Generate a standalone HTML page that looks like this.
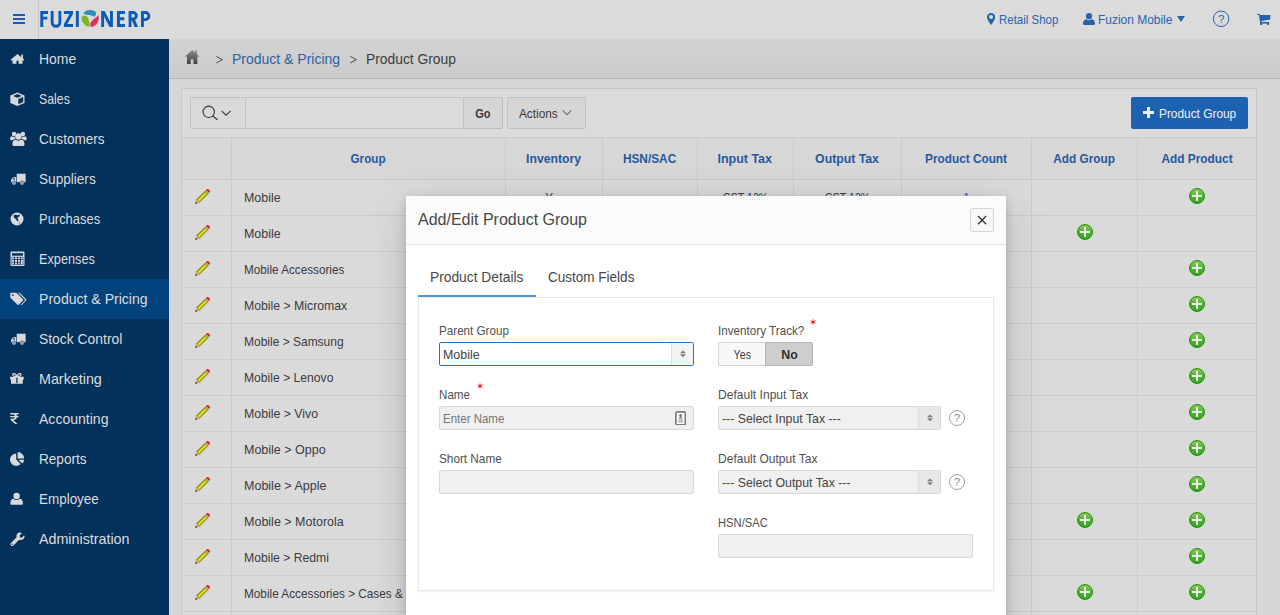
<!DOCTYPE html>
<html>
<head>
<meta charset="utf-8">
<title>Product Group</title>
<style>
*{box-sizing:border-box;margin:0;padding:0}
html,body{width:1280px;height:615px;overflow:hidden}
body{font-family:"Liberation Sans",sans-serif;font-size:12px;color:#3a3a3a;background:#d6d6d6;position:relative}
.abs{position:absolute}
.t{display:inline-block;transform-origin:0 50%;white-space:nowrap}
.tc{display:inline-block;transform-origin:50% 50%;white-space:nowrap}
/* header */
#hdr{position:absolute;left:0;top:0;width:1280px;height:39px;background:#dbdbdb}
#hdr .navbtn{position:absolute;left:0;top:0;width:39px;height:39px;border-right:1px solid #c6c6c6}
#hdr .navbtn i{position:absolute;left:13px;width:12px;height:2px;background:#1b5cb3}
.hlink{position:absolute;top:0;height:39px;line-height:41px;color:#2a62ad;font-size:12px;white-space:nowrap}
/* sidebar */
#side{position:absolute;left:0;top:39px;width:169px;height:576px;background:#02315c}
#side .it{position:absolute;left:0;width:169px;height:40px;line-height:40px;color:#dcdcdc;font-size:14px;padding-left:39px;white-space:nowrap}
#side .it.act{background:#02427d}
#side .it svg{position:absolute;left:9px;top:12px;width:18px;height:16px;fill:#d9d9d9}
/* breadcrumb */
#bc{position:absolute;left:169px;top:39px;width:1111px;height:40px;background:linear-gradient(#d3d3d3,#cbcbcb);border-bottom:1px solid #b5b5b5;font-size:14px;line-height:40px;color:#3c3c3c}
#bc span{position:absolute;top:0;white-space:nowrap}
#bc .lnk{color:#2a62a5}
/* region */
#reg{position:absolute;left:181px;top:88px;width:1076px;height:540px;background:#dbdbdb;border:1px solid #c8c8c8}
.sbox{position:absolute;left:190px;top:97px;width:274px;height:32px;border:1px solid #c2c2c2;border-radius:2px 0 0 2px;background:#dbdbdb}
.sbox .ic{position:absolute;left:0;top:0;width:55px;height:30px;border-right:1px solid #c2c2c2;background:#d9d9d9}
.btn{position:absolute;height:32px;line-height:32px;border:1px solid #c0c0c0;background:#d6d6d6;color:#383838;font-size:12px;border-radius:2px;white-space:nowrap}
.hot{position:absolute;left:1131px;top:97px;width:117px;height:32px;background:#1d62b0;color:#f0f0f0;font-size:12px;line-height:34px;border-radius:2px;white-space:nowrap}
/* table */
.th{position:absolute;top:137px;height:43px;line-height:42px;border-top:1px solid #cacaca;border-left:1px solid #cacaca;border-bottom:1px solid #c8c8c8;background:#d7d7d7;color:#25589f;font-weight:bold;font-size:12px;text-align:center;white-space:nowrap}
.row{position:absolute;left:182px;width:1074px;height:36px;border-bottom:1px solid #cbcbcb;background:#dadada}
.row .c{position:absolute;top:0;height:35px;border-left:1px solid #cbcbcb;line-height:37px;font-size:12px;color:#3a3a42;white-space:nowrap}
.row .c.g{padding-left:12px}
.row .c.ctr{text-align:center}
.pen{position:absolute;left:13px;top:8px;width:16px;height:16px}
.plus{position:absolute;top:8px;width:16px;height:16px}
/* modal */
#dlg{position:absolute;left:406px;top:196px;width:600px;height:440px;background:#ffffff;border-radius:2px;box-shadow:0 3px 10px rgba(0,0,0,.17),0 10px 40px rgba(0,0,0,.15)}
#dlg .tb{position:absolute;left:0;top:0;width:600px;height:49px;background:#fbfbfb;border-bottom:1px solid #e6e6e6;border-radius:2px 2px 0 0}
#dlg .tt{position:absolute;left:12px;top:0;line-height:47px;font-size:16px;color:#484848;white-space:nowrap}
#dlg .cl{position:absolute;left:564px;top:12px;width:24px;height:24px;border:1px solid #d4d4d4;border-radius:2px;background:#f8f8f8}
.tab{position:absolute;top:62px;height:38px;line-height:38px;font-size:14px;color:#484848;white-space:nowrap}
.tabline{position:absolute;left:12px;top:99px;width:118px;height:2px;background:#5096e0}
.tabc{position:absolute;left:12px;top:101px;width:576px;height:294px;border:1px solid #e9e9e9;box-shadow:0 1px 2px rgba(0,0,0,.06);background:#fff}
.lbl{position:absolute;font-size:12px;color:#505050;line-height:16px;white-space:nowrap}
.req{position:absolute;width:6px;height:6px}
.inp{position:absolute;height:24px;background:#f0f0f0;border:1px solid #d9d9d9;border-radius:2px;font-size:12px;line-height:24px;padding-left:3.400px;color:#444;white-space:nowrap}
.inp .arr{position:absolute;right:0;top:0;width:22px;height:22px;background:#e8e8e8;border-left:1px solid #dcdcdc}
.inp .arr svg{position:absolute;left:8px;top:7px;width:6px;height:8px}
.hlp{position:absolute;width:16px;height:16px;border:1px solid #a0a0a0;border-radius:50%;color:#8c8c8c;font-size:11px;line-height:14px;text-align:center}
</style>
</head>
<body>
<svg width="0" height="0" style="position:absolute">
  <defs>
    <linearGradient id="gg" x1="0" y1="0" x2="0" y2="1"><stop offset="0" stop-color="#8ccb55"/><stop offset="0.5" stop-color="#4fb52c"/><stop offset="1" stop-color="#35a31f"/></linearGradient>
    <g id="plus"><circle cx="8" cy="8" r="7.500" fill="url(#gg)" stroke="#2b8a1c" stroke-width="1"/><path d="M7 3h2v4h4v2h-4v4h-2v-4h-4v-2h4z" fill="#ece4ee"/></g>
    <g id="pen"><path d="M1.200 11.600 L10.300 2.500 L13.500 5.700 L4.400 14.800 L0.500 15.500 Z" fill="#8f8f12"/><path d="M2.600 12 L10.400 4.200 L11.900 5.700 L4.100 13.500 Z" fill="#dede22"/><path d="M1.200 11.600 L4.400 14.800 L0.500 15.500 Z" fill="#e3c08a"/><path d="M0.300 15.700 L2.600 15.300 L0.700 13.400 Z" fill="#2a2a38"/><path d="M10.300 2.500 L13.500 5.700" stroke="#9aa4a4" stroke-width="1.200"/><path d="M10.900 1.900 C11.800 0.800 13.300 0.900 14.200 1.800 C15.100 2.700 15.200 4.200 14.100 5.100 Z" fill="#e32412"/></g>
  </defs>
</svg>
<div id="hdr">
  <div class="navbtn"><i style="top:14px"></i><i style="top:18px"></i><i style="top:22px"></i></div>
  <svg class="abs" style="left:36px;top:4px" width="120" height="30" viewBox="0 0 120 30">
    <g fill="none" stroke="#0b5bb9" stroke-width="2.900">
      <path d="M5.750 23V7M4.300 8.450H12M4.300 14.100H11.300"/>
      <path d="M16.150 7V18.400A3.850 3.850 0 0 0 23.850 18.400V7"/>
      <path d="M27.900 8.450H37M27.900 21.550H37"/>
      <path d="M41.350 7V23"/>
      <path d="M66.650 7V23M75.450 7V23"/>
      <path d="M82.450 7V23M81 8.450H89M81 14.800H88.300M81 21.550H89"/>
      <path d="M94.050 7V23M92.600 8.450H97A3.300 3.300 0 0 1 97 15.050H92.600"/>
      <path d="M106.450 7V23M105 8.450H109.300A3.600 3.600 0 0 1 109.300 15.650H105"/>
    </g>
    <g fill="#0b5bb9">
      <path d="M33.600 9.900H37L31.300 20.100H27.900Z"/>
      <path d="M65.200 7H68.600L76.900 23H73.500Z"/>
      <path d="M95.800 16H99.200L102 23H98.600Z"/>
    </g>
    <path d="M47.300 9.800C48.500 7.500 51 6 54 6.100C57 6.100 59.500 7 60 9C60.300 10.500 59.500 12 58.300 12.700C56 11.500 53 11 50.500 10.800C49 10.600 48 10.300 47.300 9.800Z" fill="#2e8fba"/>
    <path d="M46 12.300C47.500 11.500 50 11.800 51.300 12.800C52.800 14.500 53.500 19 53.900 22.600C52.500 23 50.500 22.500 49 21C46.500 18.800 44.800 15.500 46 12.300Z" fill="#80b22d"/>
    <path d="M62.400 11.300C63.300 14 62.800 17.500 60.500 20C58.800 22 56.500 23.200 55 22.800C54 21.500 54 19.500 55 18C56.500 15.800 60.500 13.500 62.400 11.300Z" fill="#de2f5c"/>
  </svg>
  <svg class="abs" style="left:987px;top:12.800px" width="8.200" height="12.100" viewBox="0 0 8.200 12.100"><path d="M4.100 0C1.800 0 0 1.800 0 4.100c0 2.700 4.100 8 4.100 8s4.100-5.300 4.100-8C8.200 1.800 6.400 0 4.100 0zm0 6.100a2 2 0 1 1 0-4a2 2 0 0 1 0 4z" fill="#2260b0"/></svg>
  <div class="hlink" style="left:998.700px"><span class="t" style="font-size:12.7px;transform:scaleX(0.9047)">Retail Shop</span></div>
  <svg class="abs" style="left:1083px;top:13px" width="12" height="12" viewBox="0 0 12 12"><circle cx="6" cy="3.200" r="3.100" fill="#2a62ad"/><path d="M0 10.500C0 7.500 2 6.300 3.500 6.300c.7.600 1.500 1 2.500 1s1.800-.4 2.500-1C10 6.300 12 7.500 12 10.500c0 1-.8 1.500-1.600 1.500H1.600C.8 12 0 11.500 0 10.500z" fill="#2a62ad"/></svg>
  <div class="hlink" style="left:1097.700px"><span class="t" style="font-size:12.7px;transform:scaleX(0.9423)">Fuzion Mobile</span></div>
  <svg class="abs" style="left:1177px;top:16px" width="8" height="6" viewBox="0 0 8 6"><path d="M0 0h8L4 6z" fill="#2a62ad"/></svg>
  <svg class="abs" style="left:1212px;top:10px" width="18" height="18" viewBox="0 0 18 18"><circle cx="9.100" cy="8.800" r="7.750" fill="none" stroke="#2a62ad" stroke-width="1"/><text x="9.200" y="13.200" text-anchor="middle" font-family="Liberation Sans" font-size="11.500" fill="#2a62ad">?</text></svg>
  <svg class="abs" style="left:1257px;top:14px" width="14" height="12" viewBox="0 0 14 12"><path d="M0 0H2.500L3 1H13.400L13.200 5.600L4.500 6.900L4.700 8.100H12.200V9.400H12V10.900H10.200V9.400H5.200V10.900H3.300V9.400H3V8.100L2 1H0Z" fill="#2260b0"/></svg>
</div>

<div id="side">
  <div class="it" style="top:0px"><svg viewBox="0 0 18 16"><path d="M8.500 3 L1.600 8.800 L2.500 9.800 L3.500 9 V12.800 H7.400 V9.800 H9.600 V12.800 H13.500 V9 L14.500 9.800 L15.400 8.800 L14 7.600 V3.600 H12.300 V6.200 Z"/></svg><span class="t" style="font-size:14.5px;transform:scaleX(0.9618)">Home</span></div>
  <div class="it" style="top:40px"><svg viewBox="0 0 18 16"><path d="M8.400 1.600 L15.500 4.500 V11.900 L8.400 15 L1.300 11.900 V4.500 Z"/><path d="M8.400 3.100 L12.700 4.900 L8.400 6.700 L4.100 4.900 Z" fill="#02315c"/><path d="M9.300 8.100 L14.200 6.100 V11.100 L9.300 13.300 Z" fill="#02315c"/></svg><span class="t" style="font-size:14.5px;transform:scaleX(0.8492)">Sales</span></div>
  <div class="it" style="top:80px"><svg viewBox="0 0 18 16"><circle cx="9.400" cy="5.400" r="3.200"/><path d="M5 15 C3.900 15 3.400 14.400 3.400 13.500 C3.400 10.500 4.500 8.700 6.300 8.500 C7.200 9.300 8.300 9.600 9.400 9.600 S11.600 9.300 12.500 8.500 C14.300 8.700 15.500 10.500 15.500 13.500 C15.500 14.400 15 15 13.900 15 Z"/><circle cx="5" cy="3" r="2.200"/><circle cx="13.900" cy="3" r="2.200"/><path d="M1.100 7.600 C1.100 6.200 1.900 5.300 2.800 5.300 C3.600 5.900 4.800 6 5.700 5.600 C5.600 6.700 5.900 7.500 6.300 8 C4.800 8.100 4 8.600 3.600 9.200 H2.200 C1.500 9.200 1.100 8.700 1.100 7.600 Z"/><path d="M17.700 7.600 C17.700 6.200 16.900 5.300 16 5.300 C15.200 5.900 14 6 13.100 5.600 C13.200 6.700 12.900 7.500 12.500 8 C14 8.100 14.800 8.600 15.200 9.200 H16.600 C17.300 9.200 17.700 8.700 17.700 7.600 Z"/></svg><span class="t" style="font-size:14.5px;transform:scaleX(0.9358)">Customers</span></div>
  <div class="it" style="top:120px"><svg viewBox="0 0 18 16"><path d="M7.700 2.700 H16.600 V11.200 H7.700 Z"/><path d="M7.100 5.900 H4.500 L2 8.500 V11.200 H7.100 Z"/><path d="M4.900 6.800 H6 V8.400 H3.400 Z" fill="#02315c" opacity="0.850"/><circle cx="5" cy="12" r="2.100" stroke="#02315c" stroke-width="0.600"/><circle cx="13" cy="12" r="2.100" stroke="#02315c" stroke-width="0.600"/><circle cx="5" cy="12" r="0.650" fill="#02315c"/><circle cx="13" cy="12" r="0.650" fill="#02315c"/></svg><span class="t" style="font-size:14.5px;transform:scaleX(0.9380)">Suppliers</span></div>
  <div class="it" style="top:160px"><svg viewBox="0 0 18 16"><circle cx="8" cy="8" r="6.500"/><path d="M4.600 4.300 C6 3.300 7.500 3.600 8.800 4.200 C9.600 4 10.400 3.500 11 3.800 C11.200 5 10.200 5.800 9 6.300 C8.300 7 8.600 8.200 9.300 9 C9.800 9.800 9.300 10.300 8.500 10.200 C7.500 9.600 7 8.300 6.200 7.600 C5.200 6.800 4.300 5.600 4.600 4.300 Z" fill="#02315c"/><path d="M9.600 10.900 C10.300 11 11 11.600 11.300 12.500 C10.600 12.600 9.800 11.800 9.600 10.900 Z" fill="#02315c"/></svg><span class="t" style="font-size:14.5px;transform:scaleX(0.8919)">Purchases</span></div>
  <div class="it" style="top:200px"><svg viewBox="0 0 18 16"><rect x="1.500" y="0.600" width="14" height="14.400" rx="1.200"/><rect x="3" y="2.200" width="11" height="2.500" fill="#02315c"/><rect x="2.700" y="5.900" width="11.600" height="8" fill="#02315c"/><g><rect x="3.100" y="6.400" width="2" height="1.900"/><rect x="6" y="6.400" width="2" height="1.900"/><rect x="8.900" y="6.400" width="2" height="1.900"/><rect x="11.800" y="6.400" width="2" height="1.900"/><rect x="3.100" y="9" width="2" height="1.900"/><rect x="6" y="9" width="2" height="1.900"/><rect x="8.900" y="9" width="2" height="1.900"/><rect x="11.800" y="9" width="2" height="4.500"/><rect x="3.100" y="11.600" width="2" height="1.900"/><rect x="6" y="11.600" width="2" height="1.900"/><rect x="8.900" y="11.600" width="2" height="1.900"/></g></svg><span class="t" style="font-size:14.5px;transform:scaleX(0.8763)">Expenses</span></div>
  <div class="it act" style="top:240px"><svg viewBox="0 0 18 16"><path d="M1.200 2.500 Q1.200 1.700 2 1.700 H6.600 Q7.300 1.700 7.900 2.300 L13.900 8.300 Q14.400 8.800 13.900 9.400 L9.700 13.800 Q9.100 14.400 8.500 13.800 L1.900 7.200 Q1.200 6.500 1.200 5.800 Z"/><circle cx="3.700" cy="4.100" r="0.950" fill="#02427d"/><path d="M9 1.700 H9.800 Q10.500 1.700 11.100 2.300 L17.100 8.300 Q17.600 8.800 17.100 9.400 L12.900 13.800 Q12.300 14.400 11.600 14 L15.800 9.500 Q16.300 8.900 15.800 8.400 Z"/></svg><span class="t" style="font-size:14.5px;transform:scaleX(0.9695)">Product &amp; Pricing</span></div>
  <div class="it" style="top:280px"><svg viewBox="0 0 18 16"><path d="M7.700 2.700 H16.600 V11.200 H7.700 Z"/><path d="M7.100 5.900 H4.500 L2 8.500 V11.200 H7.100 Z"/><path d="M4.900 6.800 H6 V8.400 H3.400 Z" fill="#02315c" opacity="0.850"/><circle cx="5" cy="12" r="2.100" stroke="#02315c" stroke-width="0.600"/><circle cx="13" cy="12" r="2.100" stroke="#02315c" stroke-width="0.600"/><circle cx="5" cy="12" r="0.650" fill="#02315c"/><circle cx="13" cy="12" r="0.650" fill="#02315c"/></svg><span class="t" style="font-size:14.5px;transform:scaleX(0.9571)">Stock Control</span></div>
  <div class="it" style="top:320px"><svg viewBox="0 0 18 16"><path d="M1.100 5.700 H14.750 V8.500 H13.800 V12.750 H2 V8.500 H1.100 Z"/><path d="M7.300 6.400 H8.600 V12 H7.300 Z" fill="#02315c"/><path d="M7.900 5.400 C6.400 2.200 4.300 1.900 3.800 3.300 C3.400 4.600 5 5.600 7.900 5.400 C10.800 5.600 12.400 4.600 12 3.300 C11.500 1.900 9.400 2.200 7.900 5.400 Z" fill="none" stroke="#d9d9d9" stroke-width="1.200"/></svg><span class="t" style="font-size:14.5px;transform:scaleX(0.9864)">Marketing</span></div>
  <div class="it" style="top:360px"><svg viewBox="0 0 18 16"><path d="M1.200 2 H9.600 V3.500 H7.300 C7.600 3.900 7.800 4.400 7.900 4.900 H9.600 V6.300 H7.900 C7.600 8 6.200 8.900 4.100 9 L8.700 12.900 H6.200 L1.600 9 V7.700 H3.500 C5 7.700 5.800 7.200 6 6.300 H1.200 V4.900 H5.900 C5.600 3.900 4.800 3.500 3.500 3.500 H1.200 Z"/></svg><span class="t" style="font-size:14.5px;transform:scaleX(0.9687)">Accounting</span></div>
  <div class="it" style="top:400px"><svg viewBox="0 0 18 16"><path d="M7.200 2.400 V8.600 L11.600 13 A6.200 6.200 0 1 1 7.200 2.400 Z"/><path d="M8.600 1.100 A6.600 6.600 0 0 1 15.200 7.600 H8.600 Z"/><path d="M9.300 8.700 H15.200 A6.200 6.200 0 0 1 13.300 12.500 Z"/></svg><span class="t" style="font-size:14.5px;transform:scaleX(0.9356)">Reports</span></div>
  <div class="it" style="top:440px"><svg viewBox="0 0 18 16"><circle cx="7.600" cy="5" r="3.200"/><path d="M3 13.800 C2 13.800 1.400 13.300 1.400 12.300 C1.400 9.300 2.600 8 4.500 7.800 C5.300 8.600 6.400 9 7.600 9 S9.900 8.600 10.700 7.800 C12.600 8 13.900 9.300 13.900 12.300 C13.900 13.300 13.300 13.800 12.300 13.800 Z"/></svg><span class="t" style="font-size:14.5px;transform:scaleX(0.9274)">Employee</span></div>
  <div class="it" style="top:480px"><svg viewBox="0 0 18 16"><path d="M15.600 4.900 C15.600 7.300 13.700 8.900 11.600 8.900 C11.100 8.900 10.600 8.800 10.200 8.700 L4.400 14.400 C3.700 15.100 2.600 15.100 2 14.400 C1.300 13.700 1.300 12.700 2 12 L7.700 6.300 C7.100 4.300 8.100 1.600 11 1.600 C11.800 1.600 12.500 1.800 13 2.100 L10.600 4.500 L11 6.400 L12.700 6.800 L15.100 4.400 C15.400 4.500 15.600 4.700 15.600 4.900 Z"/><circle cx="3.200" cy="13.200" r="0.700" fill="#02315c"/></svg><span class="t" style="font-size:14.5px;transform:scaleX(0.9851)">Administration</span></div>
</div>

<div id="bc">
  <svg class="abs" style="left:15px;top:10px" width="16" height="16" viewBox="0 0 16 16"><defs><linearGradient id="hg" x1="0" y1="0" x2="0" y2="1"><stop offset="0" stop-color="#8c8c8c"/><stop offset="1" stop-color="#444"/></linearGradient></defs><path d="M8.200 0.900L1 7.600H3V14.900H6.800V10.300H9.400V14.900H13.300V7.600H15.300L12.800 5.300V1.300H11.200V3.800Z" fill="url(#hg)"/></svg>
  <svg class="abs" style="left:46.800px;top:16.500px" width="8" height="8" viewBox="0 0 8 8"><path d="M0.300 0.500L6.400 3.700L0.300 6.900" fill="none" stroke="#3a3a3a" stroke-width="0.900"/></svg>
  <span class="lnk" style="left:63.300px"><span class="t" style="font-size:14.2px;transform:scaleX(0.9863)">Product &amp; Pricing</span></span>
  <svg class="abs" style="left:181px;top:16.500px" width="8" height="8" viewBox="0 0 8 8"><path d="M0.300 0.500L6.400 3.700L0.300 6.900" fill="none" stroke="#3a3a3a" stroke-width="0.900"/></svg>
  <span style="left:197.300px"><span class="t" style="font-size:14.2px;transform:scaleX(0.9746)">Product Group</span></span>
</div>

<div id="reg"></div>
<div class="sbox"><div class="ic">
  <svg class="abs" style="left:11px;top:6px" width="36" height="18" viewBox="0 0 36 18"><circle cx="6.700" cy="7.800" r="5.700" fill="none" stroke="#3c3c3c" stroke-width="1.100"/><path d="M10.800 11.900 L15.500 15.700" stroke="#3c3c3c" stroke-width="1.300" fill="none"/><path d="M19.600 6.800 L24.100 11.200 L28.600 6.800" stroke="#3c3c3c" stroke-width="1.100" fill="none"/></svg>
</div></div>
<div class="btn" style="left:463px;top:97px;width:40px;font-weight:bold;border-radius:0 2px 2px 0;text-align:center"><span class="tc" style="font-size:12.7px;transform:scaleX(0.8675)">Go</span></div>
<div class="btn" style="left:507px;top:97px;width:79px;padding-left:11px"><span class="t" style="font-size:12.7px;transform:scaleX(0.9292)">Actions</span><svg class="abs" style="left:53.500px;top:11px" width="10" height="8" viewBox="0 0 10 8"><path d="M0.700 1.500 L5 5.700 L9.300 1.500" stroke="#3c3c3c" stroke-width="1" fill="none"/></svg></div>
<div class="hot"><svg class="abs" style="left:12px;top:10px" width="11" height="11" viewBox="0 0 11 11"><path d="M4 0h3v4h4v3H7v4H4V7H0V4h4z" fill="#f0f0f0"/></svg><span style="position:absolute;left:27.700px"><span class="t" style="font-size:12.7px;transform:scaleX(0.9359)">Product Group</span></span></div>

<div class="th" style="left:182px;width:49px;border-left:0;"></div>
<div class="th" style="left:231px;width:274px;"><span class="tc" style="font-size:12.7px;transform:scaleX(0.9214)">Group</span></div>
<div class="th" style="left:505px;width:97px;"><span class="tc" style="font-size:12.7px;transform:scaleX(0.9622)">Inventory</span></div>
<div class="th" style="left:602px;width:95px;"><span class="tc" style="font-size:12.7px;transform:scaleX(0.9343)">HSN/SAC</span></div>
<div class="th" style="left:697px;width:96px;padding-right:2px;"><span class="tc" style="font-size:12.7px;transform:scaleX(0.9820)">Input Tax</span></div>
<div class="th" style="left:793px;width:108px;"><span class="tc" style="font-size:12.7px;transform:scaleX(0.9670)">Output Tax</span></div>
<div class="th" style="left:901px;width:130px;"><span class="tc" style="font-size:12.7px;transform:scaleX(0.9299)">Product Count</span></div>
<div class="th" style="left:1031px;width:106px;"><span class="tc" style="font-size:12.7px;transform:scaleX(0.9320)">Add Group</span></div>
<div class="th" style="left:1137px;width:119px;"><span class="tc" style="font-size:12.7px;transform:scaleX(0.9358)">Add Product</span></div>
<div class="row" style="top:180px"><div class="c" style="left:0;width:49px;border-left:0"><svg class="pen" viewBox="0 0 16 16"><use href="#pen"/></svg></div><div class="c g" style="left:49px;width:274px"><span class="t" style="font-size:12.7px;transform:scaleX(0.9810)">Mobile</span></div><div class="c ctr" style="left:323px;width:97px"><span class="tc" style="font-size:12.7px;transform:scaleX(0.9208)">Y</span><span style="display:inline-block;width:10.200px"></span></div><div class="c ctr" style="left:420px;width:95px"></div><div class="c ctr" style="left:515px;width:96px"><span class="tc" style="font-size:12.7px;transform:scaleX(0.8299)">GST 12%</span></div><div class="c ctr" style="left:611px;width:108px"><span class="tc" style="font-size:12.7px;transform:scaleX(0.8299)">GST 12%</span></div><div class="c ctr" style="left:719px;width:130px;color:#25589f"><span class="tc" style="font-size:12.7px;transform:scaleX(0.9203)">1</span></div><div class="c" style="left:849px;width:106px"></div><div class="c" style="left:955px;width:119px"><svg class="plus" style="left:51px" viewBox="0 0 16 16"><use href="#plus"/></svg></div></div>
<div class="row" style="top:216px"><div class="c" style="left:0;width:49px;border-left:0"><svg class="pen" viewBox="0 0 16 16"><use href="#pen"/></svg></div><div class="c g" style="left:49px;width:274px"><span class="t" style="font-size:12.7px;transform:scaleX(0.9810)">Mobile</span></div><div class="c ctr" style="left:323px;width:97px"></div><div class="c ctr" style="left:420px;width:95px"></div><div class="c ctr" style="left:515px;width:96px"></div><div class="c ctr" style="left:611px;width:108px"></div><div class="c ctr" style="left:719px;width:130px"></div><div class="c" style="left:849px;width:106px"><svg class="plus" style="left:45px" viewBox="0 0 16 16"><use href="#plus"/></svg></div><div class="c" style="left:955px;width:119px"></div></div>
<div class="row" style="top:252px"><div class="c" style="left:0;width:49px;border-left:0"><svg class="pen" viewBox="0 0 16 16"><use href="#pen"/></svg></div><div class="c g" style="left:49px;width:274px"><span class="t" style="font-size:12.7px;transform:scaleX(0.9236)">Mobile Accessories</span></div><div class="c ctr" style="left:323px;width:97px"></div><div class="c ctr" style="left:420px;width:95px"></div><div class="c ctr" style="left:515px;width:96px"></div><div class="c ctr" style="left:611px;width:108px"></div><div class="c ctr" style="left:719px;width:130px"></div><div class="c" style="left:849px;width:106px"></div><div class="c" style="left:955px;width:119px"><svg class="plus" style="left:51px" viewBox="0 0 16 16"><use href="#plus"/></svg></div></div>
<div class="row" style="top:288px"><div class="c" style="left:0;width:49px;border-left:0"><svg class="pen" viewBox="0 0 16 16"><use href="#pen"/></svg></div><div class="c g" style="left:49px;width:274px"><span class="t" style="font-size:12.7px;transform:scaleX(0.9661)">Mobile &gt; Micromax</span></div><div class="c ctr" style="left:323px;width:97px"></div><div class="c ctr" style="left:420px;width:95px"></div><div class="c ctr" style="left:515px;width:96px"></div><div class="c ctr" style="left:611px;width:108px"></div><div class="c ctr" style="left:719px;width:130px"></div><div class="c" style="left:849px;width:106px"></div><div class="c" style="left:955px;width:119px"><svg class="plus" style="left:51px" viewBox="0 0 16 16"><use href="#plus"/></svg></div></div>
<div class="row" style="top:324px"><div class="c" style="left:0;width:49px;border-left:0"><svg class="pen" viewBox="0 0 16 16"><use href="#pen"/></svg></div><div class="c g" style="left:49px;width:274px"><span class="t" style="font-size:12.7px;transform:scaleX(0.9447)">Mobile &gt; Samsung</span></div><div class="c ctr" style="left:323px;width:97px"></div><div class="c ctr" style="left:420px;width:95px"></div><div class="c ctr" style="left:515px;width:96px"></div><div class="c ctr" style="left:611px;width:108px"></div><div class="c ctr" style="left:719px;width:130px"></div><div class="c" style="left:849px;width:106px"></div><div class="c" style="left:955px;width:119px"><svg class="plus" style="left:51px" viewBox="0 0 16 16"><use href="#plus"/></svg></div></div>
<div class="row" style="top:360px"><div class="c" style="left:0;width:49px;border-left:0"><svg class="pen" viewBox="0 0 16 16"><use href="#pen"/></svg></div><div class="c g" style="left:49px;width:274px"><span class="t" style="font-size:12.7px;transform:scaleX(0.9567)">Mobile &gt; Lenovo</span></div><div class="c ctr" style="left:323px;width:97px"></div><div class="c ctr" style="left:420px;width:95px"></div><div class="c ctr" style="left:515px;width:96px"></div><div class="c ctr" style="left:611px;width:108px"></div><div class="c ctr" style="left:719px;width:130px"></div><div class="c" style="left:849px;width:106px"></div><div class="c" style="left:955px;width:119px"><svg class="plus" style="left:51px" viewBox="0 0 16 16"><use href="#plus"/></svg></div></div>
<div class="row" style="top:396px"><div class="c" style="left:0;width:49px;border-left:0"><svg class="pen" viewBox="0 0 16 16"><use href="#pen"/></svg></div><div class="c g" style="left:49px;width:274px"><span class="t" style="font-size:12.7px;transform:scaleX(0.9717)">Mobile &gt; Vivo</span></div><div class="c ctr" style="left:323px;width:97px"></div><div class="c ctr" style="left:420px;width:95px"></div><div class="c ctr" style="left:515px;width:96px"></div><div class="c ctr" style="left:611px;width:108px"></div><div class="c ctr" style="left:719px;width:130px"></div><div class="c" style="left:849px;width:106px"></div><div class="c" style="left:955px;width:119px"><svg class="plus" style="left:51px" viewBox="0 0 16 16"><use href="#plus"/></svg></div></div>
<div class="row" style="top:432px"><div class="c" style="left:0;width:49px;border-left:0"><svg class="pen" viewBox="0 0 16 16"><use href="#pen"/></svg></div><div class="c g" style="left:49px;width:274px"><span class="t" style="font-size:12.7px;transform:scaleX(0.9849)">Mobile &gt; Oppo</span></div><div class="c ctr" style="left:323px;width:97px"></div><div class="c ctr" style="left:420px;width:95px"></div><div class="c ctr" style="left:515px;width:96px"></div><div class="c ctr" style="left:611px;width:108px"></div><div class="c ctr" style="left:719px;width:130px"></div><div class="c" style="left:849px;width:106px"></div><div class="c" style="left:955px;width:119px"><svg class="plus" style="left:51px" viewBox="0 0 16 16"><use href="#plus"/></svg></div></div>
<div class="row" style="top:468px"><div class="c" style="left:0;width:49px;border-left:0"><svg class="pen" viewBox="0 0 16 16"><use href="#pen"/></svg></div><div class="c g" style="left:49px;width:274px"><span class="t" style="font-size:12.7px;transform:scaleX(0.9861)">Mobile &gt; Apple</span></div><div class="c ctr" style="left:323px;width:97px"></div><div class="c ctr" style="left:420px;width:95px"></div><div class="c ctr" style="left:515px;width:96px"></div><div class="c ctr" style="left:611px;width:108px"></div><div class="c ctr" style="left:719px;width:130px"></div><div class="c" style="left:849px;width:106px"></div><div class="c" style="left:955px;width:119px"><svg class="plus" style="left:51px" viewBox="0 0 16 16"><use href="#plus"/></svg></div></div>
<div class="row" style="top:504px"><div class="c" style="left:0;width:49px;border-left:0"><svg class="pen" viewBox="0 0 16 16"><use href="#pen"/></svg></div><div class="c g" style="left:49px;width:274px"><span class="t" style="font-size:12.7px;transform:scaleX(0.9862)">Mobile &gt; Motorola</span></div><div class="c ctr" style="left:323px;width:97px"></div><div class="c ctr" style="left:420px;width:95px"></div><div class="c ctr" style="left:515px;width:96px"></div><div class="c ctr" style="left:611px;width:108px"></div><div class="c ctr" style="left:719px;width:130px"></div><div class="c" style="left:849px;width:106px"><svg class="plus" style="left:45px" viewBox="0 0 16 16"><use href="#plus"/></svg></div><div class="c" style="left:955px;width:119px"><svg class="plus" style="left:51px" viewBox="0 0 16 16"><use href="#plus"/></svg></div></div>
<div class="row" style="top:540px"><div class="c" style="left:0;width:49px;border-left:0"><svg class="pen" viewBox="0 0 16 16"><use href="#pen"/></svg></div><div class="c g" style="left:49px;width:274px"><span class="t" style="font-size:12.7px;transform:scaleX(0.9595)">Mobile &gt; Redmi</span></div><div class="c ctr" style="left:323px;width:97px"></div><div class="c ctr" style="left:420px;width:95px"></div><div class="c ctr" style="left:515px;width:96px"></div><div class="c ctr" style="left:611px;width:108px"></div><div class="c ctr" style="left:719px;width:130px"></div><div class="c" style="left:849px;width:106px"></div><div class="c" style="left:955px;width:119px"><svg class="plus" style="left:51px" viewBox="0 0 16 16"><use href="#plus"/></svg></div></div>
<div class="row" style="top:576px"><div class="c" style="left:0;width:49px;border-left:0"><svg class="pen" viewBox="0 0 16 16"><use href="#pen"/></svg></div><div class="c g" style="left:49px;width:274px"><span class="t" style="font-size:12.7px;transform:scaleX(0.9289)">Mobile Accessories &gt; Cases &amp;</span></div><div class="c ctr" style="left:323px;width:97px"></div><div class="c ctr" style="left:420px;width:95px"></div><div class="c ctr" style="left:515px;width:96px"></div><div class="c ctr" style="left:611px;width:108px"></div><div class="c ctr" style="left:719px;width:130px"></div><div class="c" style="left:849px;width:106px"><svg class="plus" style="left:45px" viewBox="0 0 16 16"><use href="#plus"/></svg></div><div class="c" style="left:955px;width:119px"><svg class="plus" style="left:51px" viewBox="0 0 16 16"><use href="#plus"/></svg></div></div>
<div class="row" style="top:612px"><div class="c" style="left:0;width:49px;border-left:0"><svg class="pen" viewBox="0 0 16 16"><use href="#pen"/></svg></div><div class="c g" style="left:49px;width:274px"><span class="t" style="font-size:12.7px;transform:scaleX(0.9201)">Mobile Accessories &gt; Screen Guards</span></div><div class="c ctr" style="left:323px;width:97px"></div><div class="c ctr" style="left:420px;width:95px"></div><div class="c ctr" style="left:515px;width:96px"></div><div class="c ctr" style="left:611px;width:108px"></div><div class="c ctr" style="left:719px;width:130px"></div><div class="c" style="left:849px;width:106px"></div><div class="c" style="left:955px;width:119px"><svg class="plus" style="left:51px" viewBox="0 0 16 16"><use href="#plus"/></svg></div></div>

<div id="dlg">
  <div class="tb"><div class="tt">Add/Edit Product Group</div><div class="cl"><svg class="abs" style="left:6px;top:6px" width="10" height="10" viewBox="0 0 10 10"><path d="M1 1 L9.200 9.200 M9.200 1 L1 9.200" stroke="#303030" stroke-width="1.250" fill="none"/></svg></div></div>
  <div class="tab" style="left:24.400px"><span class="t" style="font-size:14.0px;transform:scaleX(0.9839)">Product Details</span></div>
  <div class="tab" style="left:142px"><span class="t" style="font-size:14.0px;transform:scaleX(0.9657)">Custom Fields</span></div>
  <div class="tabline"></div>
  <div class="tabc"></div>

  <div class="lbl" style="left:33px;top:127px"><span class="t" style="font-size:12.7px;transform:scaleX(0.9181)">Parent Group</span></div>
  <div class="inp" style="left:33px;top:146px;width:255px;background:#fff;border-color:#2a6fd0"><span class="t" style="font-size:12.7px;transform:scaleX(0.9783)">Mobile</span><div class="arr" style="background:#f3f3f3"><svg viewBox="0 0 6 8"><path d="M0 3.300L3 0.400L6 3.300ZM0 4.300H6L3 7.200Z" fill="#7c7c7c"/></svg></div></div>
  <div class="lbl" style="left:33px;top:191px"><span class="t" style="font-size:12.7px;transform:scaleX(0.9151)">Name</span></div>
  <svg class="req" style="left:70.600px;top:187.200px" viewBox="0 0 7 7"><path d="M3.500 0.300V6.700M0.700 1.900L6.300 5.100M6.300 1.900L0.700 5.100" stroke="#ff3038" stroke-width="1.150" opacity="0.800"/><circle cx="3.500" cy="3.500" r="1.600" fill="#ff0a12"/></svg>
  <div class="inp" style="left:33px;top:210px;width:255px;color:#767676"><span class="t" style="font-size:12.7px;transform:scaleX(0.9061)">Enter Name</span>
    <svg class="abs" style="left:234.600px;top:3.500px" width="11.200" height="14.700" viewBox="0 0 11.200 14.700"><rect x="0.850" y="0.850" width="9.500" height="13" rx="1.400" fill="#fdfdfd" stroke="#7c7c7c" stroke-width="1.700"/><circle cx="5.600" cy="4.300" r="1.300" fill="#7a7a7a"/><path d="M3.800 7.400L4.800 5.200H6.400L7.400 7.400Z" fill="#7a7a7a"/><path d="M3.200 8.300H8V9.600H3.200ZM3.200 10.200H8V11.500H3.200Z" fill="#a0a0a0"/></svg>
  </div>
  <div class="lbl" style="left:33px;top:255px"><span class="t" style="font-size:12.7px;transform:scaleX(0.9268)">Short Name</span></div>
  <div class="inp" style="left:33px;top:274px;width:255px"></div>

  <div class="lbl" style="left:312px;top:127px"><span class="t" style="font-size:12.7px;transform:scaleX(0.9203)">Inventory Track?</span></div>
  <svg class="req" style="left:404.300px;top:123.200px" viewBox="0 0 7 7"><path d="M3.500 0.300V6.700M0.700 1.900L6.300 5.100M6.300 1.900L0.700 5.100" stroke="#ff3038" stroke-width="1.150" opacity="0.800"/><circle cx="3.500" cy="3.500" r="1.600" fill="#ff0a12"/></svg>
  <div class="abs" style="left:312px;top:146px;width:47px;height:24px;border:1px solid #d6d6d6;border-right:0;border-radius:2px 0 0 2px;background:#f8f8f8;text-align:center;line-height:24px;font-size:12px;color:#404040"><span class="tc" style="font-size:12.7px;transform:scaleX(0.8447)">Yes</span></div>
  <div class="abs" style="left:359px;top:146px;width:48px;height:24px;border:1px solid #b4b4b4;border-radius:0 2px 2px 0;background:#cecece;text-align:center;line-height:24px;font-size:12px;font-weight:bold;color:#303030"><span class="tc" style="font-size:12.7px;transform:scaleX(0.9687)">No</span></div>
  <div class="lbl" style="left:312px;top:191px"><span class="t" style="font-size:12.7px;transform:scaleX(0.9508)">Default Input Tax</span></div>
  <div class="inp" style="left:312px;top:210px;width:223px;padding-left:3px"><span class="t" style="font-size:12.7px;transform:scaleX(0.9701)">--- Select Input Tax ---</span><div class="arr"><svg viewBox="0 0 6 8"><path d="M0 3.300L3 0.400L6 3.300ZM0 4.300H6L3 7.200Z" fill="#7c7c7c"/></svg></div></div>
  <div class="hlp" style="left:543px;top:214px">?</div>
  <div class="lbl" style="left:312px;top:255px"><span class="t" style="font-size:12.7px;transform:scaleX(0.9480)">Default Output Tax</span></div>
  <div class="inp" style="left:312px;top:274px;width:223px;padding-left:3px"><span class="t" style="font-size:12.7px;transform:scaleX(0.9717)">--- Select Output Tax ---</span><div class="arr"><svg viewBox="0 0 6 8"><path d="M0 3.300L3 0.400L6 3.300ZM0 4.300H6L3 7.200Z" fill="#7c7c7c"/></svg></div></div>
  <div class="hlp" style="left:543px;top:278px">?</div>
  <div class="lbl" style="left:312px;top:319px"><span class="t" style="font-size:12.7px;transform:scaleX(0.8821)">HSN/SAC</span></div>
  <div class="inp" style="left:312px;top:338px;width:255px"></div>
</div>
</body>
</html>
